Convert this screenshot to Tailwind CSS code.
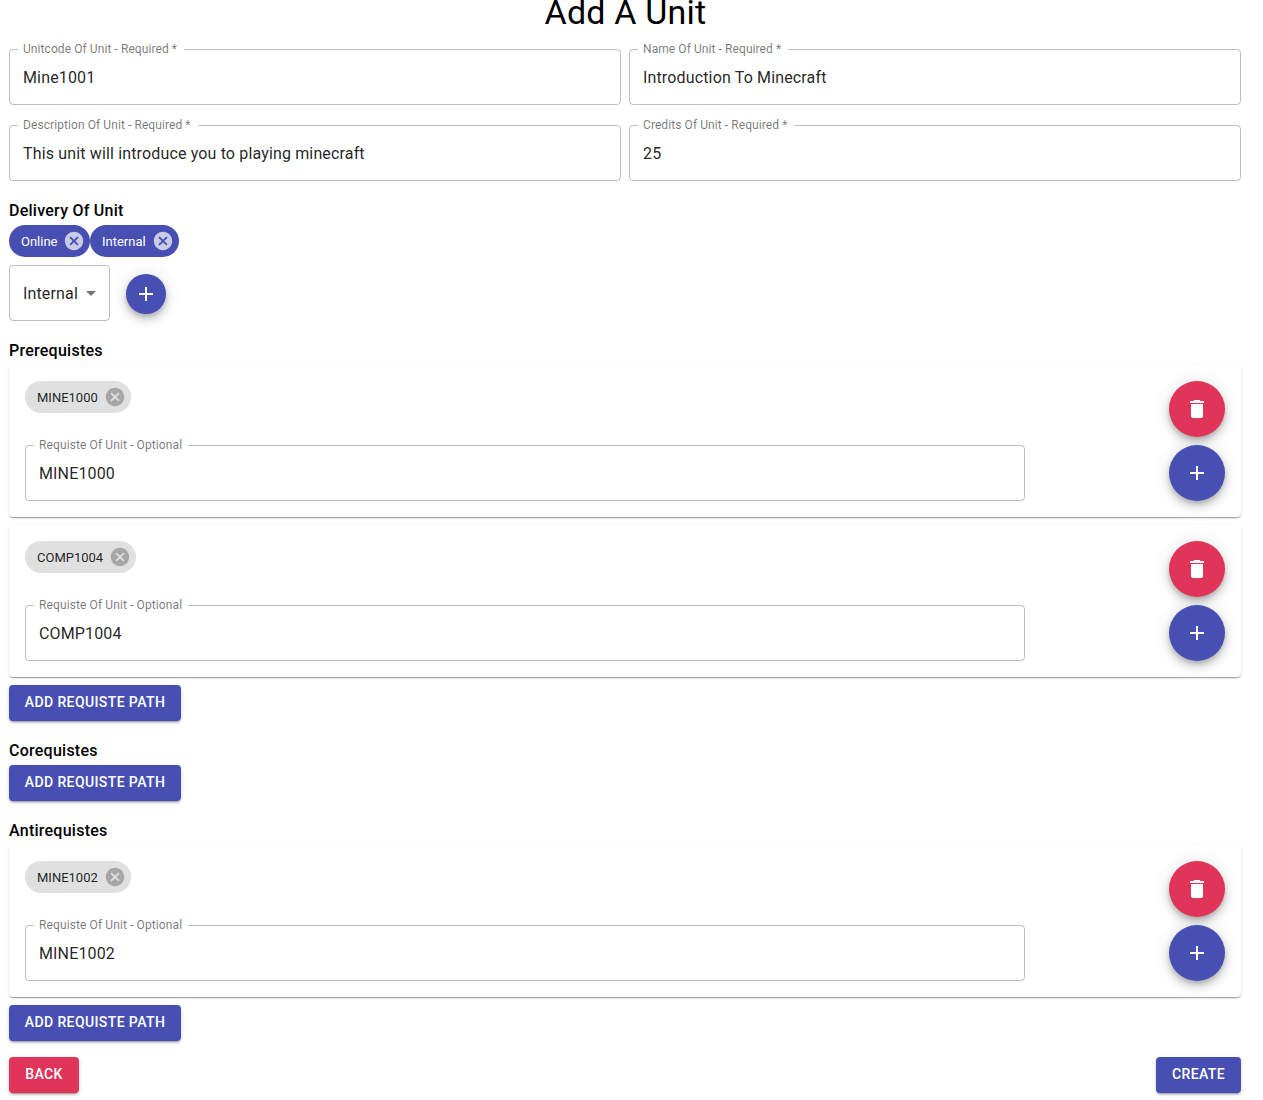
<!DOCTYPE html>
<html lang="en">
<head>
<meta charset="utf-8">
<title>Add A Unit</title>
<script src="https://cdn.jsdelivr.net/npm/@tailwindcss/browser@4"></script>
</head>
<body class="h-[1100px] overflow-hidden bg-white font-['Roboto',sans-serif] text-base text-black">
<svg class="hidden">
  <symbol id="cancel" viewBox="0 0 24 24"><path d="M12 2C6.47 2 2 6.47 2 12s4.47 10 10 10 10-4.47 10-10S17.53 2 12 2zm5 13.59L15.59 17 12 13.41 8.41 17 7 15.59 10.59 12 7 8.41 8.41 7 12 10.59 15.59 7 17 8.41 13.41 12 17 15.59z"/></symbol>
  <symbol id="add" viewBox="0 0 24 24"><path d="M19 13h-6v6h-2v-6H5v-2h6V5h2v6h6v2z"/></symbol>
  <symbol id="delete" viewBox="0 0 24 24"><path d="M6 19c0 1.1.9 2 2 2h8c1.1 0 2-.9 2-2V7H6v12zM19 4h-3.5l-1-1h-5l-1 1H5v2h14V4z"/></symbol>
  <symbol id="drop" viewBox="0 0 24 24"><path d="M7 10l5 5 5-5z"/></symbol>
</svg>
<main class="flex h-full w-[1241px] flex-col pl-[9px]">
  <h1 class="flex h-[49px] shrink-0 items-start justify-center pb-2 pl-px text-[34px] leading-[25px] tracking-[0.2px]">Add A Unit</h1>

  <section class="grid shrink-0 grid-cols-2 gap-x-2 gap-y-5">
    <fieldset class="-mt-[5px] h-[61px] rounded border border-black/25 pl-2">
      <legend class="h-[11px] w-[166px] pl-[5px] text-xs leading-[11px] tracking-[0.08px] whitespace-nowrap text-black/54">Unitcode Of Unit - Required *</legend>
      <div class="flex h-[46px] items-center pl-[5px] tracking-[0.15px] text-black/87">Mine1001</div>
    </fieldset>
    <fieldset class="-mt-[5px] h-[61px] rounded border border-black/25 pl-2">
      <legend class="h-[11px] w-[150px] pl-[5px] text-xs leading-[11px] tracking-[0.08px] whitespace-nowrap text-black/54">Name Of Unit - Required *</legend>
      <div class="flex h-[46px] items-center pl-[5px] tracking-[0.15px] text-black/87">Introduction To Minecraft</div>
    </fieldset>
    <fieldset class="-mt-[5px] h-[61px] rounded border border-black/25 pl-2">
      <legend class="h-[11px] w-[180px] pl-[5px] text-xs leading-[11px] tracking-[0.08px] whitespace-nowrap text-black/54">Description Of Unit - Required *</legend>
      <div class="flex h-[46px] items-center pl-[5px] tracking-[0.15px] text-black/87">This unit will introduce you to playing minecraft</div>
    </fieldset>
    <fieldset class="-mt-[5px] h-[61px] rounded border border-black/25 pl-2">
      <legend class="h-[11px] w-[156px] pl-[5px] text-xs leading-[11px] tracking-[0.08px] whitespace-nowrap text-black/54">Credits Of Unit - Required *</legend>
      <div class="flex h-[46px] items-center pl-[5px] tracking-[0.15px] text-black/87">25</div>
    </fieldset>
  </section>

  <h2 class="mt-4 h-7 shrink-0 leading-7 font-medium tracking-[0.25px]">Delivery Of Unit</h2>
  <div class="flex shrink-0">
    <span class="flex h-8 w-[81px] items-center justify-between rounded-full bg-[#484fb3] pt-0.5 pr-[5px] pl-3 text-[13px] text-white">Online<svg class="-mt-0.5 size-[22px] fill-white/70"><use href="#cancel"/></svg></span>
    <span class="flex h-8 w-[89px] items-center justify-between rounded-full bg-[#484fb3] pt-0.5 pr-[5px] pl-3 text-[13px] text-white">Internal<svg class="-mt-0.5 size-[22px] fill-white/70"><use href="#cancel"/></svg></span>
  </div>
  <div class="mt-2 flex shrink-0 items-center gap-4">
    <div class="flex h-14 w-[101px] items-center justify-between rounded border border-black/25 pt-0.5 pr-1.5 pl-[13px] tracking-[0.15px] text-black/87">Internal<svg class="-mt-0.5 size-6 fill-black/54"><use href="#drop"/></svg></div>
    <button class="mt-0.5 flex size-10 items-center justify-center rounded-full bg-[#484fb3] shadow-[0_3px_5px_-1px_rgba(0,0,0,0.2),0_6px_10px_0_rgba(0,0,0,0.14),0_1px_18px_0_rgba(0,0,0,0.12)]"><svg class="size-6 fill-white"><use href="#add"/></svg></button>
  </div>

  <h2 class="mt-4 h-7 shrink-0 leading-7 font-medium tracking-[0.25px]">Prerequistes</h2>
  <div class="flex shrink-0 flex-col gap-2">
    <div class="flex h-[152px] justify-between rounded p-4 shadow-[0_2px_1px_-1px_rgba(0,0,0,0.2),0_1px_1px_0_rgba(0,0,0,0.14),0_1px_3px_0_rgba(0,0,0,0.12)]">
      <div class="flex w-[1000px] flex-col justify-between">
        <span class="flex h-8 w-[106px] items-center justify-between rounded-full bg-[#e0e0e0] pt-0.5 pr-[5px] pl-3 text-[13px] text-black/87">MINE1000<svg class="-mt-0.5 size-[22px] fill-black/26"><use href="#cancel"/></svg></span>
        <fieldset class="h-[61px] rounded border border-black/25 pl-2">
          <legend class="h-[11px] w-[154px] pl-[5px] text-xs leading-[11px] tracking-[0.11px] whitespace-nowrap text-black/54">Requiste Of Unit - Optional</legend>
          <div class="flex h-[46px] items-center pl-[5px] tracking-[0.15px] text-black/87">MINE1000</div>
        </fieldset>
      </div>
      <div class="flex flex-col gap-2">
        <button class="flex size-14 items-center justify-center rounded-full bg-[#e03459] shadow-[0_3px_5px_-1px_rgba(0,0,0,0.2),0_6px_10px_0_rgba(0,0,0,0.14),0_1px_18px_0_rgba(0,0,0,0.12)]"><svg class="size-6 fill-white"><use href="#delete"/></svg></button>
        <button class="flex size-14 items-center justify-center rounded-full bg-[#484fb3] shadow-[0_3px_5px_-1px_rgba(0,0,0,0.2),0_6px_10px_0_rgba(0,0,0,0.14),0_1px_18px_0_rgba(0,0,0,0.12)]"><svg class="size-6 fill-white"><use href="#add"/></svg></button>
      </div>
    </div>
    <div class="flex h-[152px] justify-between rounded p-4 shadow-[0_2px_1px_-1px_rgba(0,0,0,0.2),0_1px_1px_0_rgba(0,0,0,0.14),0_1px_3px_0_rgba(0,0,0,0.12)]">
      <div class="flex w-[1000px] flex-col justify-between">
        <span class="flex h-8 w-[111px] items-center justify-between rounded-full bg-[#e0e0e0] pt-0.5 pr-[5px] pl-3 text-[13px] text-black/87">COMP1004<svg class="-mt-0.5 size-[22px] fill-black/26"><use href="#cancel"/></svg></span>
        <fieldset class="h-[61px] rounded border border-black/25 pl-2">
          <legend class="h-[11px] w-[154px] pl-[5px] text-xs leading-[11px] tracking-[0.11px] whitespace-nowrap text-black/54">Requiste Of Unit - Optional</legend>
          <div class="flex h-[46px] items-center pl-[5px] tracking-[0.15px] text-black/87">COMP1004</div>
        </fieldset>
      </div>
      <div class="flex flex-col gap-2">
        <button class="flex size-14 items-center justify-center rounded-full bg-[#e03459] shadow-[0_3px_5px_-1px_rgba(0,0,0,0.2),0_6px_10px_0_rgba(0,0,0,0.14),0_1px_18px_0_rgba(0,0,0,0.12)]"><svg class="size-6 fill-white"><use href="#delete"/></svg></button>
        <button class="flex size-14 items-center justify-center rounded-full bg-[#484fb3] shadow-[0_3px_5px_-1px_rgba(0,0,0,0.2),0_6px_10px_0_rgba(0,0,0,0.14),0_1px_18px_0_rgba(0,0,0,0.12)]"><svg class="size-6 fill-white"><use href="#add"/></svg></button>
      </div>
    </div>
    <button class="h-9 w-[172px] rounded bg-[#484fb3] pb-[3px] text-sm font-medium tracking-[0.4px] whitespace-nowrap text-white shadow-[0_3px_1px_-2px_rgba(0,0,0,0.2),0_2px_2px_0_rgba(0,0,0,0.14),0_1px_5px_0_rgba(0,0,0,0.12)]">ADD REQUISTE PATH</button>
  </div>

  <h2 class="mt-4 h-7 shrink-0 leading-7 font-medium tracking-[0.25px]">Corequistes</h2>
  <button class="h-9 w-[172px] shrink-0 rounded bg-[#484fb3] pb-[3px] text-sm font-medium tracking-[0.4px] whitespace-nowrap text-white shadow-[0_3px_1px_-2px_rgba(0,0,0,0.2),0_2px_2px_0_rgba(0,0,0,0.14),0_1px_5px_0_rgba(0,0,0,0.12)]">ADD REQUISTE PATH</button>

  <h2 class="mt-4 h-7 shrink-0 leading-7 font-medium tracking-[0.25px]">Antirequistes</h2>
  <div class="flex shrink-0 flex-col gap-2">
    <div class="flex h-[152px] justify-between rounded p-4 shadow-[0_2px_1px_-1px_rgba(0,0,0,0.2),0_1px_1px_0_rgba(0,0,0,0.14),0_1px_3px_0_rgba(0,0,0,0.12)]">
      <div class="flex w-[1000px] flex-col justify-between">
        <span class="flex h-8 w-[106px] items-center justify-between rounded-full bg-[#e0e0e0] pt-0.5 pr-[5px] pl-3 text-[13px] text-black/87">MINE1002<svg class="-mt-0.5 size-[22px] fill-black/26"><use href="#cancel"/></svg></span>
        <fieldset class="h-[61px] rounded border border-black/25 pl-2">
          <legend class="h-[11px] w-[154px] pl-[5px] text-xs leading-[11px] tracking-[0.11px] whitespace-nowrap text-black/54">Requiste Of Unit - Optional</legend>
          <div class="flex h-[46px] items-center pl-[5px] tracking-[0.15px] text-black/87">MINE1002</div>
        </fieldset>
      </div>
      <div class="flex flex-col gap-2">
        <button class="flex size-14 items-center justify-center rounded-full bg-[#e03459] shadow-[0_3px_5px_-1px_rgba(0,0,0,0.2),0_6px_10px_0_rgba(0,0,0,0.14),0_1px_18px_0_rgba(0,0,0,0.12)]"><svg class="size-6 fill-white"><use href="#delete"/></svg></button>
        <button class="flex size-14 items-center justify-center rounded-full bg-[#484fb3] shadow-[0_3px_5px_-1px_rgba(0,0,0,0.2),0_6px_10px_0_rgba(0,0,0,0.14),0_1px_18px_0_rgba(0,0,0,0.12)]"><svg class="size-6 fill-white"><use href="#add"/></svg></button>
      </div>
    </div>
    <button class="h-9 w-[172px] rounded bg-[#484fb3] pb-[3px] text-sm font-medium tracking-[0.4px] whitespace-nowrap text-white shadow-[0_3px_1px_-2px_rgba(0,0,0,0.2),0_2px_2px_0_rgba(0,0,0,0.14),0_1px_5px_0_rgba(0,0,0,0.12)]">ADD REQUISTE PATH</button>
  </div>

  <div class="mt-4 flex shrink-0 justify-between">
    <button class="h-9 w-[70px] rounded bg-[#e03459] pb-[3px] text-sm font-medium tracking-[0.4px] text-white shadow-[0_3px_1px_-2px_rgba(0,0,0,0.2),0_2px_2px_0_rgba(0,0,0,0.14),0_1px_5px_0_rgba(0,0,0,0.12)]">BACK</button>
    <button class="h-9 w-[85px] rounded bg-[#484fb3] pb-[3px] text-sm font-medium tracking-[0.4px] text-white shadow-[0_3px_1px_-2px_rgba(0,0,0,0.2),0_2px_2px_0_rgba(0,0,0,0.14),0_1px_5px_0_rgba(0,0,0,0.12)]">CREATE</button>
  </div>
</main>
</body>
</html>
